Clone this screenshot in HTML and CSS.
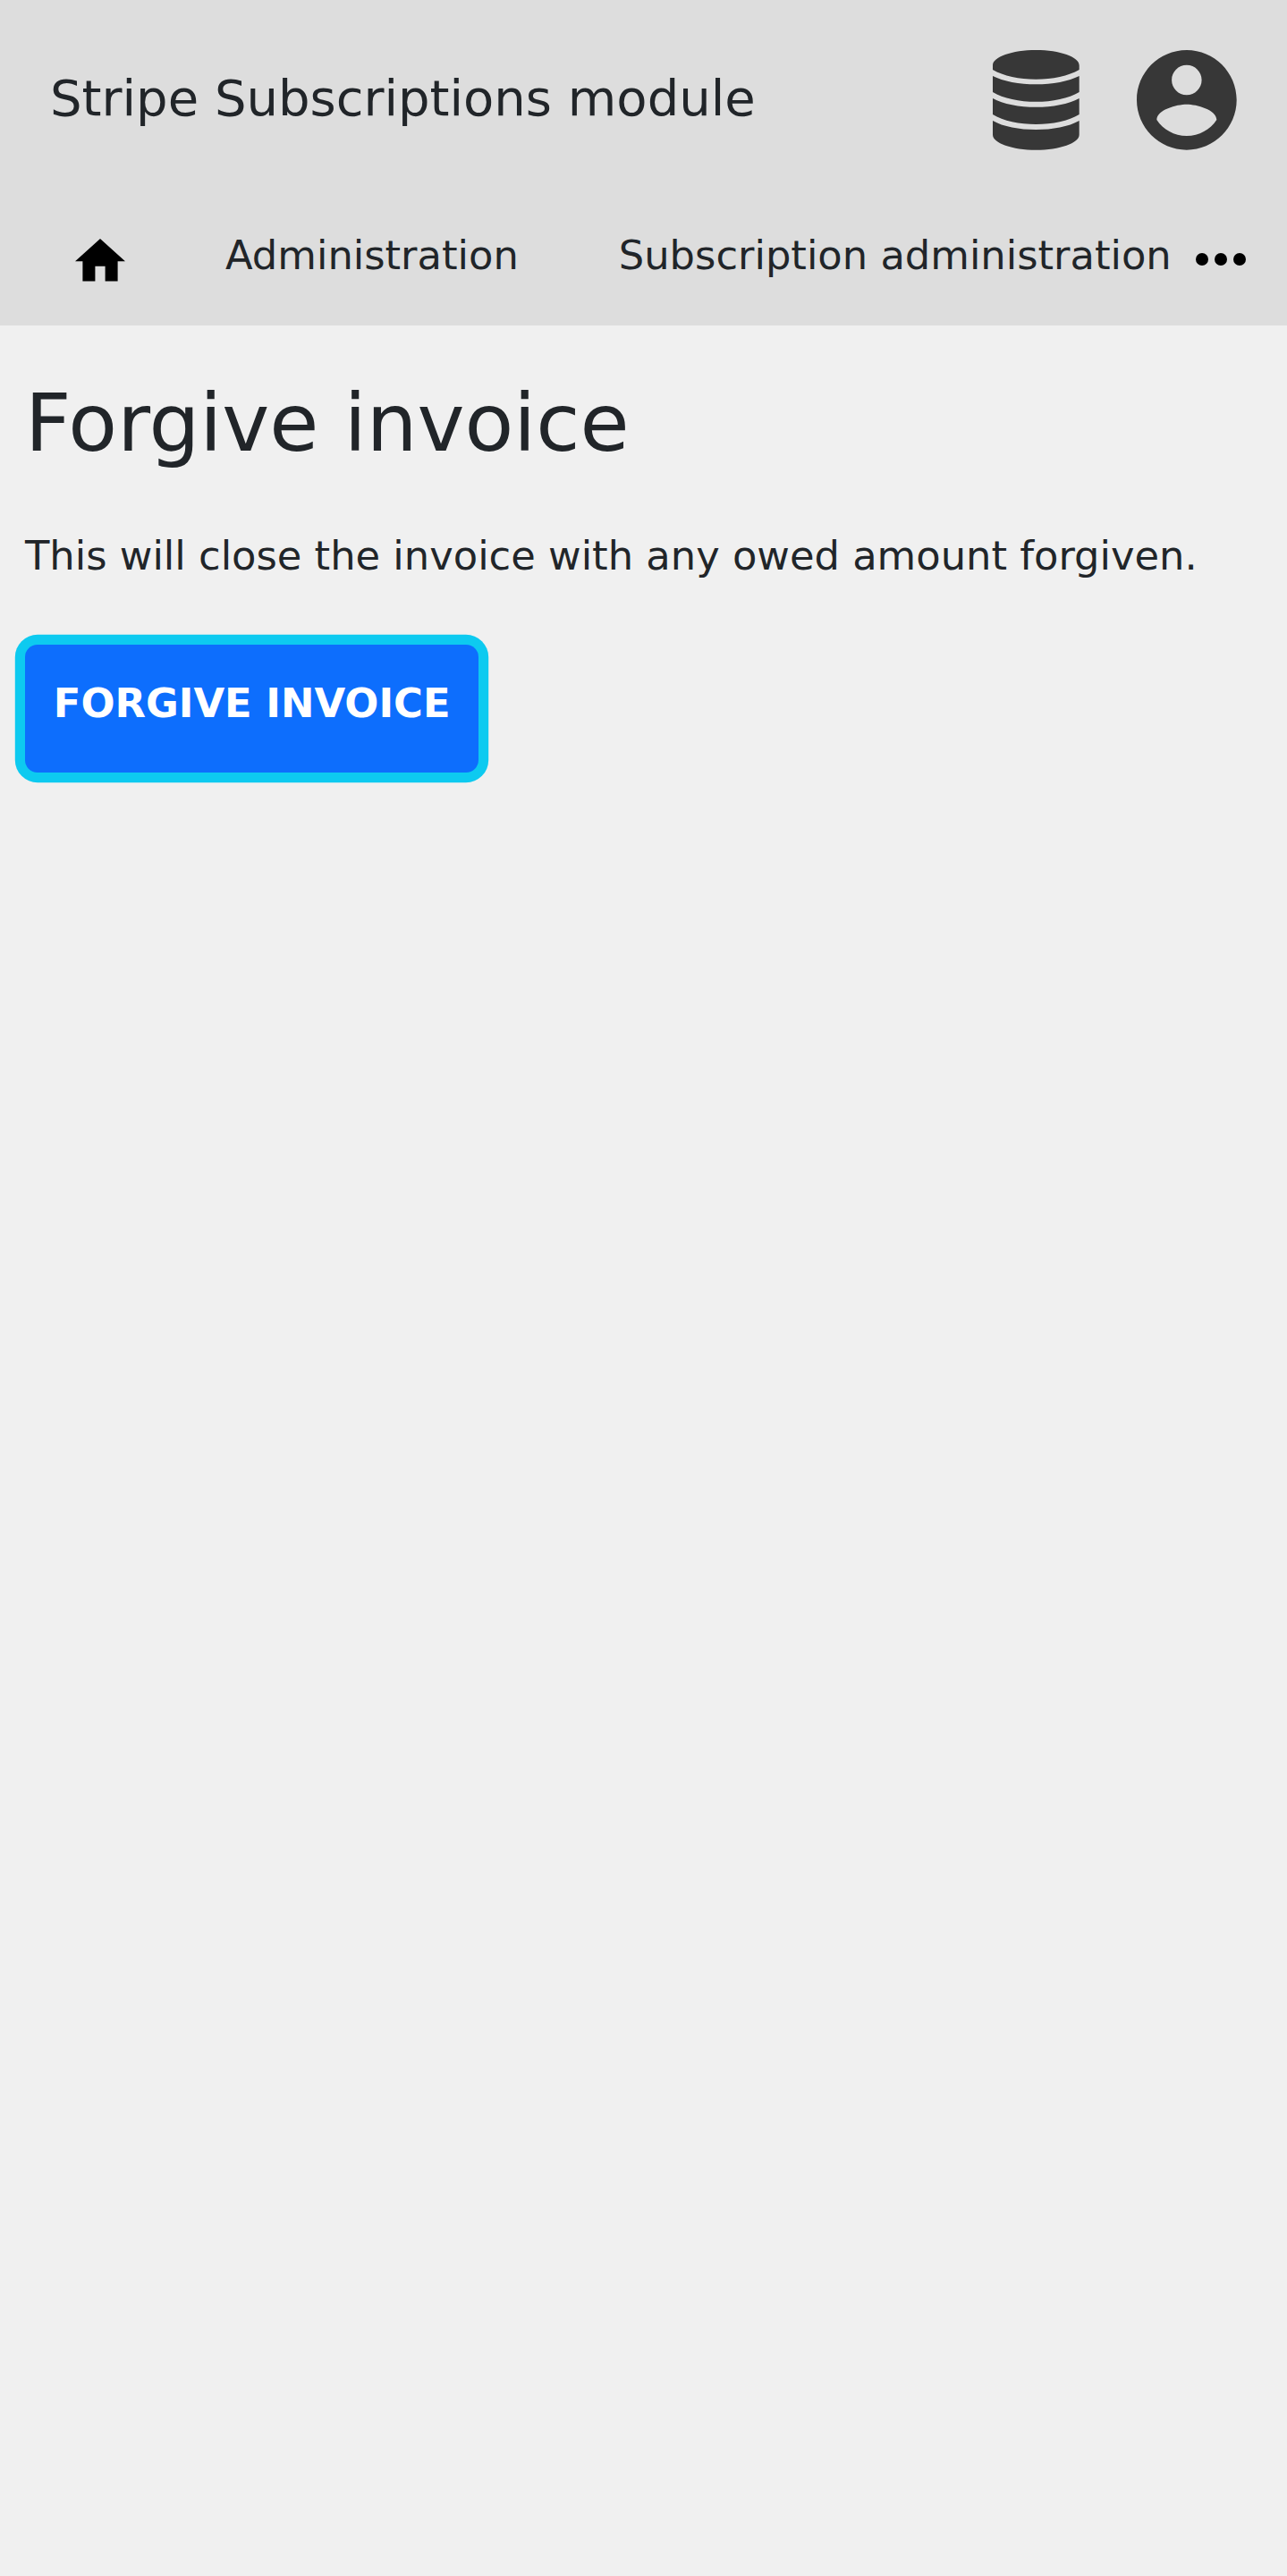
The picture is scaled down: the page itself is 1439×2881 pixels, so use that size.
FILE: index.html
```html
<!DOCTYPE html>
<html lang="en">
<head>
<meta charset="utf-8">
<title>Forgive invoice</title>
<link rel="stylesheet" href="styles.css">
</head>
<body>
<header class="header">
  <div class="topbar">
    <div class="brand">Stripe Subscriptions module</div>
    <div class="actions">
      <svg class="icon-data" viewBox="90.5 78 290 335"><path d="M90.5 129C90.5 101 155 78 235.5 78S380.5 101 380.5 129V144C345 165 290 176 235.5 176S125 165 90.5 144ZM90.5 165C125 183 180 193 235.5 193S345 183 380.5 165V219C345 240 290 251.500 235.500 251.500S125 240 90.500 219ZM90.500 240C125 259 180 269.500 235.500 269.500S345 259 380.500 240V294C345 316 290 327 235.500 327S125 316 90.500 294ZM90.500 315C125 335 180 345 235.500 345S345 335 380.500 315V362C380.500 390 315 413 235.500 413S90.500 390 90.500 362Z"/></svg>
      <svg class="icon-user" viewBox="2 2 20 20"><path d="M12 2C6.480 2 2 6.480 2 12s4.480 10 10 10 10-4.480 10-10S17.520 2 12 2zm0 3c1.660 0 3 1.340 3 3s-1.340 3-3 3-3-1.340-3-3 1.340-3 3-3zm0 14.200c-2.500 0-4.710-1.280-6-3.220.030-1.990 4-3.080 6-3.080 1.990 0 5.970 1.090 6 3.080-1.290 1.940-3.500 3.220-6 3.220z"/></svg>
    </div>
  </div>
  <nav class="nav">
    <a class="home"><svg class="icon-home" viewBox="2 3 20 17"><path d="M10 20v-6h4v6h5v-8h3L12 3 2 12h3v8z"/></svg></a>
    <a class="link">Administration</a>
    <a class="link">Subscription administration</a>
    <svg class="icon-more" viewBox="4 10 16 4"><circle cx="6" cy="12" r="2"/><circle cx="12" cy="12" r="2"/><circle cx="18" cy="12" r="2"/></svg>
  </nav>
</header>
<main class="content">
  <h1 class="heading">Forgive invoice</h1>
  <p class="text">This will close the invoice with any owed amount forgiven.</p>
  <button class="submit" type="submit">FORGIVE INVOICE</button>
</main>
</body>
</html>
```
FILE: styles.css
```css
* { box-sizing: border-box; }
html { background: #f0f0f0; }
body {
  margin: 0;
  min-height: 100vh;
  font: 44.8px/67.2px "DejaVu Sans", sans-serif;
  color: #212529;
}
svg { display: block; flex: none; }
.header { height: 364px; background: #ddd; }
.topbar {
  display: flex;
  justify-content: space-between;
  align-items: flex-start;
  height: 224px;
  padding: 56px 56.500px 0 56px;
}
.brand { padding-top: 11.600px; font-size: 56px; line-height: 84px; white-space: nowrap; }
.actions { display: flex; gap: 64.300px; fill: #373737; }
.icon-data { width: 96.700px; height: 111.700px; }
.icon-user { width: 111.700px; height: 111.700px; }
.nav {
  display: flex;
  align-items: flex-start;
  height: 140px;
  padding: 28px 0 0 84px;
  white-space: nowrap;
}
.home { margin: 15px 56px 0 0; }
.icon-home { width: 56px; height: 47.600px; }
.link { padding: 0 56px; }
.link:nth-of-type(3) { padding-right: 26.800px; }
.icon-more { width: 56px; height: 14px; margin-top: 31.300px; }
.content { min-height: calc(100vh - 364px); padding: 56px 28px 0; }
.heading { margin: 0 0 60.500px; font-size: 89.600px; line-height: 107.500px; font-weight: 400; }
.text { margin: 0 0 65.800px; white-space: nowrap; }
.submit {
  display: block;
  height: 143px;
  padding: 32px 31.800px 44px;
  border: 0;
  border-radius: 14px;
  background: #0d6efd;
  box-shadow: 0 0 0 11.200px #0dcaf0;
  color: #fff;
  font: bold 44.800px/67.200px "DejaVu Sans", sans-serif;
  white-space: nowrap;
}
```
